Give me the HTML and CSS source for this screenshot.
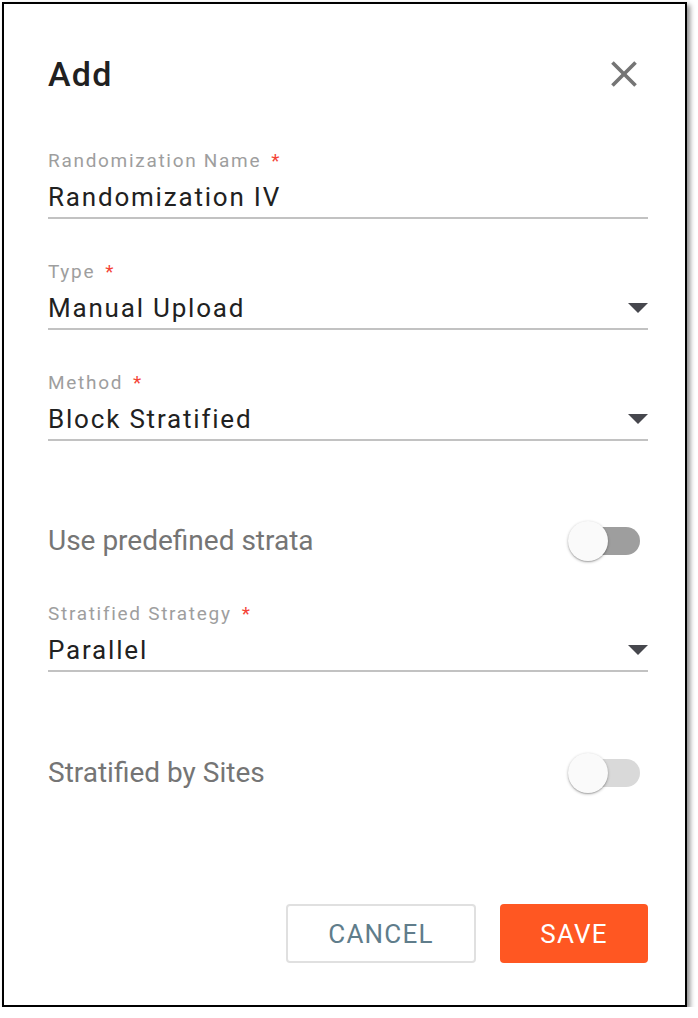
FILE: index.html
```html
<!DOCTYPE html>
<html lang="en">
<head>
<meta charset="utf-8">
<title>Add</title>
<link rel="stylesheet" href="styles.css">
</head>
<body>
<div class="dialog">
  <div class="header">
    <h1 class="title">Add</h1>
    <svg class="close" viewBox="0 0 24 24" width="44" height="44" aria-label="Close"><path d="M19 6.41L17.59 5 12 10.59 6.41 5 5 6.41 10.59 12 5 17.59 6.41 19 12 13.41 17.59 19 19 17.59 13.41 12z" fill="#757575"/></svg>
  </div>

  <div class="field field-first">
    <div class="label">Randomization Name<span class="req">*</span></div>
    <div class="value-row"><span class="value">Randomization IV</span></div>
  </div>

  <div class="field">
    <div class="label">Type<span class="req">*</span></div>
    <div class="value-row"><span class="value">Manual Upload</span><svg class="arrow" viewBox="0 0 20 10" width="20" height="10"><path d="M0 0h20L10 10z" fill="#46474d"/></svg></div>
  </div>

  <div class="field">
    <div class="label">Method<span class="req">*</span></div>
    <div class="value-row"><span class="value">Block Stratified</span><svg class="arrow" viewBox="0 0 20 10" width="20" height="10"><path d="M0 0h20L10 10z" fill="#46474d"/></svg></div>
  </div>

  <div class="toggle-row toggle-row-1">
    <span class="toggle-label">Use predefined strata</span>
    <span class="switch switch-dark"><span class="track"></span><span class="thumb"></span></span>
  </div>

  <div class="field field-after-toggle">
    <div class="label">Stratified Strategy<span class="req">*</span></div>
    <div class="value-row"><span class="value">Parallel</span><svg class="arrow" viewBox="0 0 20 10" width="20" height="10"><path d="M0 0h20L10 10z" fill="#46474d"/></svg></div>
  </div>

  <div class="toggle-row toggle-row-2">
    <span class="toggle-label">Stratified by Sites</span>
    <span class="switch switch-light"><span class="track"></span><span class="thumb"></span></span>
  </div>

  <div class="footer">
    <button class="btn btn-cancel">CANCEL</button>
    <button class="btn btn-save">SAVE</button>
  </div>
</div>
</body>
</html>
```

FILE: styles.css
```css
html, body {
  margin: 0;
  padding: 0;
  background: #ffffff;
}

body {
  font-family: Roboto, "Liberation Sans", sans-serif;
}

.dialog {
  box-sizing: border-box;
  margin: 2px 0 0 2px;
  width: 685px;
  height: 1005px;
  border: 2px solid #000;
  box-shadow: 3px 3px 5px rgba(0, 0, 0, 0.45);
  padding: 50px 37px 0 44px;
  display: flex;
  flex-direction: column;
  background: #fff;
}

.header {
  height: 40px;
  display: flex;
  align-items: center;
  justify-content: space-between;
}

.title {
  margin: 0;
  font-size: 34px;
  line-height: 40px;
  font-weight: 500;
  letter-spacing: 1.3px;
  color: #212121;
}

.close {
  display: block;
  margin-right: 2px;
  flex: none;
}

.field {
  margin-top: 41px;
  height: 70px;
  box-sizing: border-box;
  border-bottom: 2px solid #c2c2c2;
}

.field-first {
  margin-top: 55px;
}

.field-after-toggle {
  margin-top: 37px;
}

.label {
  font-size: 19px;
  line-height: 24px;
  height: 24px;
  color: #9e9e9e;
  letter-spacing: 1.7px;
}

.req {
  color: #f44336;
  margin-left: 10px;
}

.value-row {
  margin-top: 8px;
  height: 32px;
  display: flex;
  align-items: center;
  justify-content: space-between;
}

.value {
  font-size: 26px;
  line-height: 32px;
  color: #212121;
  letter-spacing: 1.8px;
}

.arrow {
  display: block;
  flex: none;
}

.toggle-row {
  height: 48px;
  display: flex;
  align-items: center;
  justify-content: space-between;
}

.toggle-row-1 {
  margin-top: 76px;
}

.toggle-row-2 {
  margin-top: 77px;
}

.toggle-label {
  font-size: 28px;
  line-height: 32px;
  color: #757575;
  letter-spacing: 0;
}

.switch {
  position: relative;
  display: block;
  width: 72px;
  height: 40px;
  margin-right: 8px;
}

.track {
  position: absolute;
  left: 4px;
  top: 6px;
  width: 68px;
  height: 28px;
  border-radius: 14px;
}

.switch-dark .track {
  background: #9e9e9e;
}

.switch-light .track {
  background: #d9d9d9;
}

.thumb {
  position: absolute;
  left: 0;
  top: 0;
  width: 40px;
  height: 40px;
  border-radius: 50%;
  background: #fafafa;
  box-shadow: 0 1px 3px rgba(0, 0, 0, 0.3), 0 1px 1px rgba(0, 0, 0, 0.14);
}

.footer {
  margin-top: 107px;
  display: flex;
  justify-content: flex-end;
  gap: 24px;
}

.btn {
  box-sizing: border-box;
  height: 59px;
  border-radius: 4px;
  font-family: Roboto, "Liberation Sans", sans-serif;
  font-size: 26px;
  letter-spacing: 1.2px;
  padding: 0;
  cursor: pointer;
}

.btn-cancel {
  width: 190px;
  background: #fff;
  border: 2px solid #e0e0e0;
  color: #607d8b;
}

.btn-save {
  width: 148px;
  background: #ff5722;
  border: none;
  color: #fff;
}
```
